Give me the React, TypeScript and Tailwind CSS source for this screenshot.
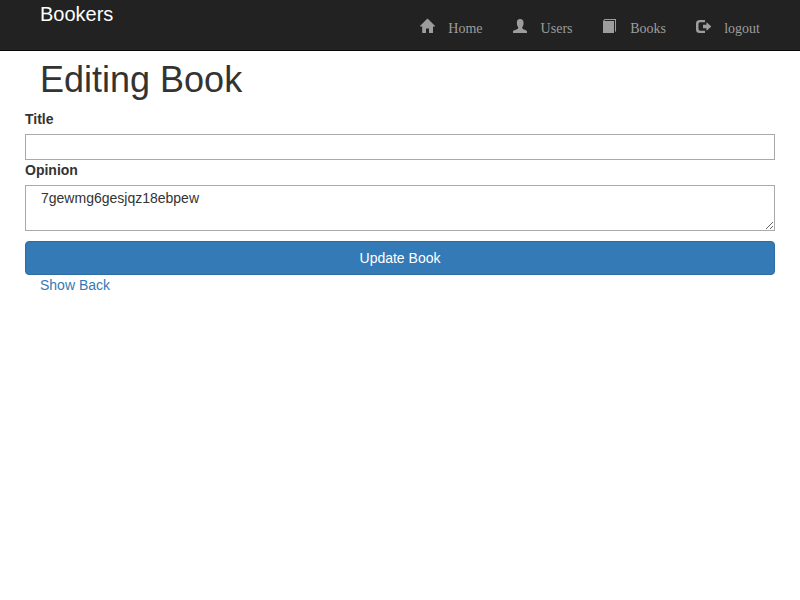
import React from "react";

// Each navigation icon is drawn on a 16 by 16 grid.
function Glyph({ d }: { d: string }) {
  return (
    <svg className="block size-4 overflow-visible" viewBox="0 0 16 16" fill="currentColor">
      <path d={d} />
    </svg>
  );
}

const HOME = "M0 8.100L7.200 .8q.3-.2.6 0L15.100 8.100q.1.300-.2.300H13V14.700q0 .3-.3.3H9.300Q9 15 9 14.700V10.500H6V14.700q0 .3-.3.3H2.500q-.3 0-.3-.3V8.400H.2Q-.1 8.400 0 8.100z";
const USER = "M0 15v-1.500q0-.6.7-1l3.300-1.300q.9-.5 1.200-1.300.2-.7-.5-1.500-.8-.9-.8-2.400V4.500Q3.700 1 7.100 1t3.400 3.500V6q0 1.500-.8 2.400-.7.8-.5 1.500.3.800 1.200 1.300l3 1.300q.6.400.6 1V15z";
const BOOK = "M0 3.100L1.600 1H13v12.200L12 14V2H2L1.200 3H11v12H0z";
const LOGOUT = "M9 2H3.700Q0 2 0 5.500v6Q0 15 3.700 15H9v-2.300H4.200Q2.500 12.700 2.500 11V6Q2.500 4.300 4.200 4.300H9zM10.400 4.800q0-.6.5-.3L15.100 8.200q.3.300 0 .6L10.900 12.500q-.5.300-.5-.3V10.300H7.200Q7 10.300 7 10V7q0-.3.2-.3h3.200z";

const items = [
  { d: HOME, label: "Home", width: "w-[62.5px]" },
  { d: USER, label: "Users", width: "w-[59.5px]" },
  { d: BOOK, label: "Books", width: "w-[63px]" },
  { d: LOGOUT, label: "logout", width: "w-[64px]" },
];

const slots = ["w-[63px]", "w-[60px]", "w-[63px]", "w-[64px]"];

export default function App() {
  return (
    <div className="min-h-[600px] bg-white font-['Liberation_Sans',sans-serif] text-sm leading-5 text-[#333]">
      <header className="flex h-[51px] justify-between border-b border-[#080808] bg-[#222] px-10">
        <a className="pt-1 text-xl leading-5 text-white">Bookers</a>
        <nav className="flex gap-[30px] pt-[18px] font-['Liberation_Serif',serif] text-[#9d9d9d]">
          {items.map((item, index) => (
            <div key={item.label} className={slots[index]}>
              <a className={`flex justify-between ${item.width}`}>
                <Glyph d={item.d} />
                <span className="pt-px">{item.label}</span>
              </a>
            </div>
          ))}
        </nav>
      </header>
      <main className="px-[25px]">
        <h1 className="mb-[10px] ml-[15px] pt-[9px] text-4xl leading-[39px]">Editing Book</h1>
        <form>
          <label className="mb-[5px] block font-bold">Title</label>
          <input className="block h-[26px] w-full border border-[#a9a9a9] px-[15px] outline-none" />
          <label className="mb-[5px] block font-bold">Opinion</label>
          <textarea className="mb-[10px] block h-[46px] w-full resize border border-[#a9a9a9] px-[15px] py-[2px] outline-none" defaultValue="7gewmg6gesjqz18ebpew" />
          <button type="button" className="block h-[34px] w-full rounded border border-[#2e6da4] bg-[#337ab7] text-white">Update Book</button>
        </form>
        <div className="ml-[15px] text-[#337ab7]"><a>Show</a> <a>Back</a></div>
      </main>
    </div>
  );
}
